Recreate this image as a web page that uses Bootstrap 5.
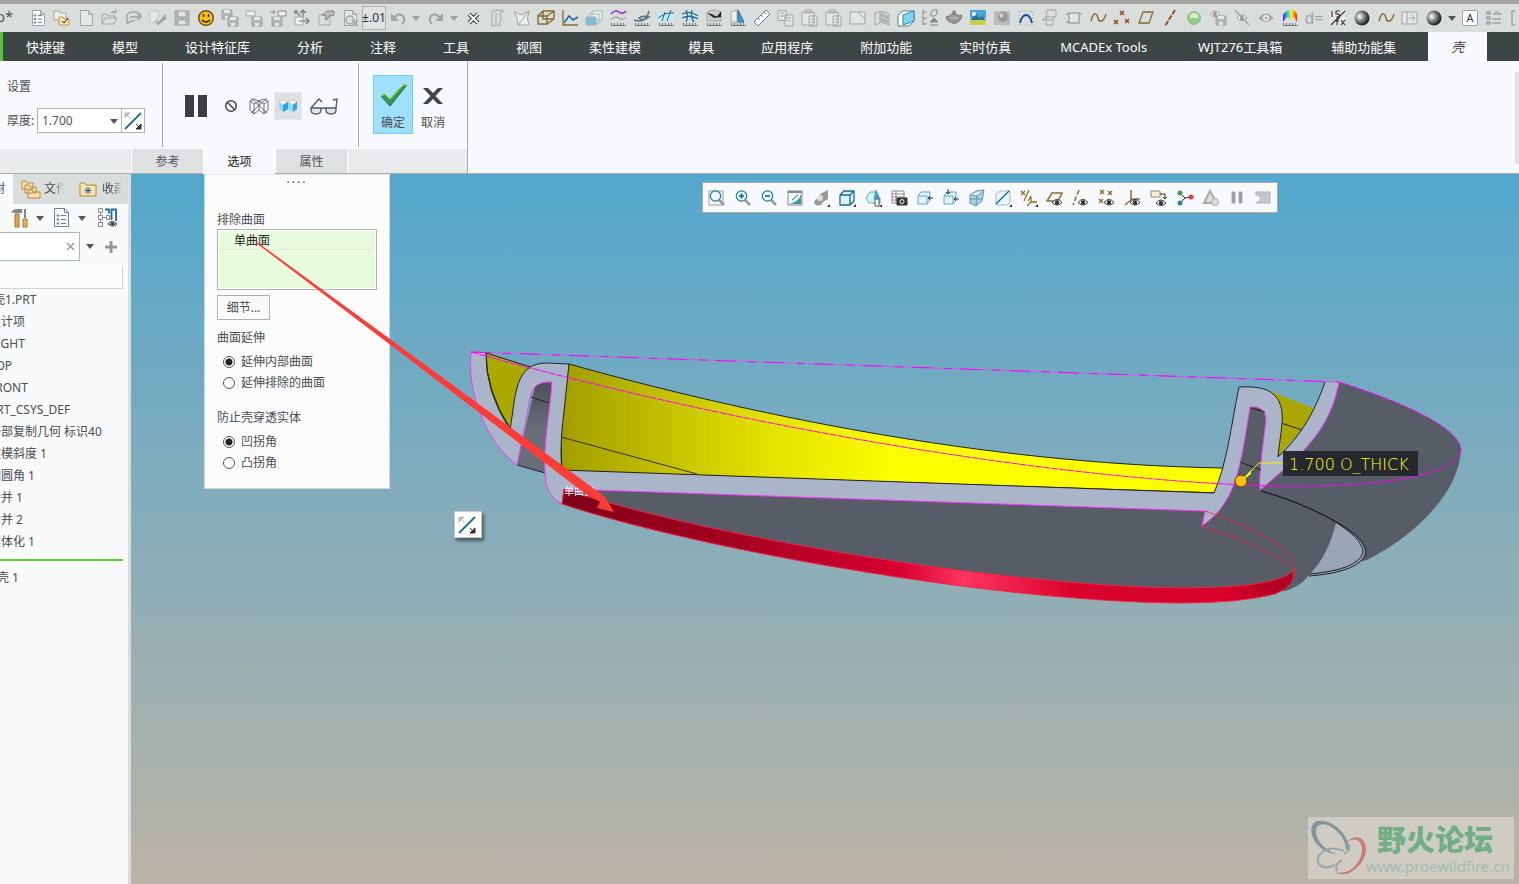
<!DOCTYPE html>
<html lang="zh-CN">
<head>
<meta charset="utf-8">
<meta name="viewport" content="width=device-width, initial-scale=1">
<title>壳1.PRT</title>
<link href="https://cdn.jsdelivr.net/npm/bootstrap@5.3.0/dist/css/bootstrap.min.css" rel="stylesheet">
<style>
:root{--chrome:#d9dedc;--paper:#f8f9fc;--ink:#4a4d50}
body{font:12px/18px "Noto Sans","Noto Sans CJK SC",sans-serif;color:var(--ink);background:var(--paper)}
button{font:inherit;color:inherit}
svg{display:block;flex:none}
.ic{width:18px;height:18px;fill:none;stroke:currentColor;stroke-width:1}
.tool{width:24px;height:24px;padding:0;border:0;background:none;display:flex;align-items:center;justify-content:center;flex:none}
.tool.arrow{width:12px}
.quick{height:32px;border-top:4px solid #a3a3a1;background:var(--chrome);padding-left:26px;color:#a3a5a5}
.quick .brandcut{left:-4px;top:3px;font-size:15px;color:#555}
.quick .early{margin-right:2px;opacity:.45}
.boxed{border:1px solid #b0b2b2;background:#e0e2e2;color:#333;font-size:12px}
.keycap{width:16px;height:16px;margin:0 4px;border:1px solid #9aa4a8;border-radius:2px;background:#fff;color:#333;font-size:11px;line-height:14px}
.tabs{height:29px;background:#3d4545;border-left:3px solid #5bbf3f;font-size:13px}
.tabs .nav-link{color:#fff;padding:0 24px 0 23px;line-height:30px}
.tabs .nav-link.roomy{padding:0 26px 0 25px}
.tabs .nav-link.now{background:var(--paper);color:#444;font-style:italic;margin-left:8px;padding:0 23px;width:59px}
.ribbon{border-bottom:1px solid #aaacae;height:113px}
.ribbon-main{width:468px;border-right:1px solid #a8aaac}
.zone{border-right:1px solid #a8aaac;height:84px;margin-top:2px}
.zone.last{border:0}
.z1{width:163px;padding:15px 0 0 7px}
.z2{width:196px;padding:15px 0 13px 19px}
.thick{width:85px;height:25px;border:1px solid #b0b2b4;border-radius:0;background:#fff;appearance:none;padding:0 4px;color:#555;font-size:12px}
.thick-label{width:30px}
.thick-wrap::after,.caret::after{content:"";display:block;border:4px solid transparent;border-top:5px solid #555;border-bottom:0}
.thick-wrap::after{position:absolute;right:4px;top:11px;pointer-events:none}
.flip{width:23px;height:25px;border:1px solid #b0b2b4;border-left:0;background:#fff;padding:0 2px}
.big{width:40px;height:59px;border:1px solid transparent;background:none;padding:5px 0 0}
.big.go{background:#a0e0ff;border-color:#70ccff}
.sub{height:24px;background:#eaebed}
.sub .lead-gap{width:131px}
.sub .nav-link{width:72px;padding:0;text-align:center;line-height:26px;height:24px;background:#dfe0e2;color:#555;border-left:1px solid #fff}
.sub .nav-link.now{background:var(--paper);color:#222;height:25px}
.sub .rest{border-left:1px solid #fff}
.gripbar{width:4px;background:#e0e1e3;margin:11px 0 9px}
.side{width:131px;border-right:3px solid var(--chrome);background:#f8fafc;overflow:hidden}
.side-tabs{height:30px;background:var(--chrome)}
.side-tabs button{border:0;background:none;padding:0;white-space:nowrap;overflow:hidden}
.side-tabs .now{width:13px;background:#f8fafc;direction:rtl;padding-right:8px}
.fade-out{width:20px;overflow:hidden;-webkit-mask:linear-gradient(90deg,#000 50%,transparent);mask:linear-gradient(90deg,#000 50%,transparent)}
.find{width:80px;height:29px;border:1px solid #a9b8b4;border-left:0;background:#fff}
.find input{width:60px;border:0;background:none;outline:0}
.heading{width:123px;height:23px;border:1px solid #cfd2d4;border-width:0 1px 1px 0;background:#fafbfb;margin-top:5px}
.tree{margin-left:-11px;line-height:22px}
.tree li{white-space:nowrap;height:22px}
.tree .insert{width:134px;height:2px;background:#62c73d;margin:6px 0}
.view{background:linear-gradient(#53a7cd,#bbb3a5);min-height:600px;overflow:hidden}
.scene{position:absolute;left:0;top:0;width:100%;height:100%;pointer-events:none}
.options{position:absolute;left:73px;top:0;width:186px;background:#fbfbfb;border:1px solid #cfd4d6;border-top-color:#e6e8e8;padding:0 12px 15px}
.dots{height:36px;text-align:center;line-height:8px;letter-spacing:2px}
.pick{border:1px solid #b0b2b2;background:#e9fbdd;height:61px;box-shadow:inset 0 0 0 1px #fff;padding:2px}
.pick div{padding-left:14px;color:#222;border-bottom:1px solid #e3e6e8;height:18px;line-height:17px}
.detail{border:1px solid #b0b2b2;background:#fafafa;width:53px;height:25px;padding:0;margin:5px 0 9px}
.rad{display:flex;align-items:center;height:21px;padding-left:6px;gap:6px}
.rad input{appearance:none;width:12px;height:12px;border:1px solid #555;border-radius:50%;background:#fff;margin:0}
.rad input:checked{background:radial-gradient(#222 0 3px,#fff 4px)}
.floatbar{position:absolute;left:571px;top:8px;height:31px;border:1px solid #b0a9a5;background:var(--paper);padding:0 1px;color:#555}
.floatbar .tool{width:26px;height:29px}
.mini{position:absolute;left:323px;top:337px;width:28px;height:27px;border:1px solid #c8c8c8;background:#fbfbfb;padding:0 3px;box-shadow:2px 3px 3px #4a5a60}
.mark-box{position:absolute;right:5px;bottom:5px;width:206px;height:62px;background:rgba(222,220,212,.62);overflow:hidden}
.mark-box .cn{left:69px;top:2px;font:900 29px/38px "Noto Sans CJK SC",sans-serif;color:#72ae84;white-space:nowrap}
.mark-box .url{left:58px;top:38px;font:15px/22px "Noto Sans",sans-serif;color:#a3bdb3;white-space:nowrap}
</style>
</head>
<body>
<div class="d-flex flex-column vh-100 overflow-hidden">
<header>
  <div class="quick d-flex align-items-center position-relative overflow-hidden" id="quick"><span class="brandcut position-absolute">o*</span></div>
  <nav class="tabs nav flex-nowrap text-nowrap overflow-hidden">
    <a class="nav-link" href="#">快捷键</a><a class="nav-link" href="#">模型</a><a class="nav-link" href="#">设计特征库</a><a class="nav-link" href="#">分析</a><a class="nav-link" href="#">注释</a><a class="nav-link" href="#">工具</a><a class="nav-link" href="#">视图</a><a class="nav-link" href="#">柔性建模</a><a class="nav-link" href="#">模具</a><a class="nav-link" href="#">应用程序</a><a class="nav-link" href="#">附加功能</a><a class="nav-link" href="#">实时仿真</a><a class="nav-link roomy" href="#">MCADEx Tools</a><a class="nav-link roomy" href="#">WJT276工具箱</a><a class="nav-link" href="#">辅助功能集</a><a class="nav-link now text-center" href="#">壳</a>
  </nav>
  <div class="ribbon d-flex justify-content-between">
    <div class="ribbon-main d-flex flex-column justify-content-between">
      <div class="d-flex">
        <div class="zone z1">
          <div>设置</div>
          <div class="d-flex align-items-center mt-2 pt-1">
            <label for="thick" class="thick-label text-nowrap">厚度:</label>
            <div class="thick-wrap position-relative"><select id="thick" class="thick"><option>1.700</option></select></div>
            <button class="flip" aria-label="反向"><svg class="ic" viewBox="0 0 18 18"><path d="M1 17L17 1" stroke="#1d6c95" stroke-width="1.8"/><path d="M1 1h5L1 6zM2 2l5 5" fill="#bbb" stroke="#bbb"/><path d="M17 17h-5l5-5zM16 16l-4-4" fill="#333" stroke="#333"/></svg></button>
          </div>
        </div>
        <div class="zone z2 d-flex align-items-center">
          <button class="tool" aria-label="暂停" style="width:28px"><svg width="24" height="24"><path d="M1 1h9v22H1zM14 1h9v22h-9z" fill="#3c3c3e"/></svg></button>
          <button class="tool ms-2" aria-label="无预览" style="width:26px"><svg class="ic" viewBox="0 0 18 18"><circle cx="9" cy="9" r="5.3" stroke-width="1.6"/><path d="M5.3 5.3l7.4 7.4" stroke-width="1.6"/></svg></button>
          <button class="tool" aria-label="线框" style="width:30px"><svg class="ic" viewBox="0 0 20 18" style="width:20px"><path d="M1 4l4-2 5 2 5-2 4 2v9l-4 4-5-4-5 4-4-4zM1 4l4 3 5-3 5 3 4-3M5 7v10M15 7v10M2 1l16 15M18 1L2 16M10 4v9" stroke-width=".8"/></svg></button>
          <button class="tool border border-secondary-subtle" aria-label="着色" style="width:28px;height:28px;background:#dfe0e2"><svg class="ic" viewBox="0 0 20 18" style="width:20px"><path d="M1 5l4-2 5 2 5-2 4 2-4 3-5-3-5 3z" fill="#fff" stroke="#ccc"/><path d="M1 5l4 3v7l-4-3zM10 5l5 3v7l-5-3z" fill="#8fd8f6" stroke="none"/><path d="M10 5L5 8v7l5-3zM19 5l-4 3v7l4-3z" fill="#2aa4dd" stroke="none"/></svg></button>
          <button class="tool ms-2" aria-label="预览" style="width:28px"><svg width="28" height="18" viewBox="0 0 28 18" fill="#dbe9f5" stroke="#555" stroke-width="1.3"><path d="M1 11h10v2q0 4-5 4t-5-4zM16 11h10v2q0 4-5 4t-5-4z"/><path d="M11 12q2.500-2 5 0M1 11l8-9 3 3M26 11l1-9-4 1" fill="none"/></svg></button>
        </div>
        <div class="zone last d-flex ps-3 pt-1"><div class="d-flex mt-2" style="margin-left:-2px">
          <button class="big go"><svg class="mx-auto" width="30" height="24" viewBox="0 0 30 24"><path d="M3 14l4-2 5 5L25 3h4L12 24z" fill="#2f9a54" stroke="#226b41"/><path d="M3 14l4-2 5 5L25 3h4" fill="none" stroke="#c8e830"/></svg><span class="d-block mt-2">确定</span></button>
          <button class="big"><svg class="mx-auto" width="30" height="24"><path d="M5 6h5l5 5 5-5h5l-7.500 8L25 22h-5l-5-5-5 5H5l7.500-8z" fill="#444"/></svg><span class="d-block mt-2">取消</span></button>
        </div></div>
      </div>
      <div class="sub nav flex-nowrap"><span class="lead-gap"></span><a class="nav-link" href="#">参考</a><a class="nav-link now" href="#">选项</a><a class="nav-link" href="#">属性</a><span class="rest"></span></div>
    </div>
    <div class="gripbar"></div>
  </div>
</header>
<main class="d-flex flex-fill">
  <aside class="side flex-shrink-0">
    <div class="side-tabs d-flex align-items-center">
      <button class="now h-100">树</button>
      <button class="d-flex align-items-center ms-2" style="gap:3px"><svg width="20" height="20" fill="#fbe3b0" stroke="#b58a3c"><path d="M1 2h4l1 2h6v6H1zM4 6h4l1 2h6v6H4zM7 11h4l1 2h7v6H7z"/></svg><span class="fade-out">文件</span></button>
      <button class="d-flex align-items-center" style="gap:5px;margin-left:15px"><svg width="18" height="18" fill="#fbe3b0" stroke="#b58a3c"><path d="M1 3h5l1 2h10v11H1z"/><path d="M9 7v7M5.500 10.500h7M6.500 8l5 5M11.500 8l-5 5" stroke="#1d6c95"/></svg><span class="fade-out">收藏</span></button>
    </div>
    <div class="d-flex align-items-center" style="height:28px;padding-left:10px">
      <button class="tool" aria-label="设置" style="width:20px"><svg width="20" height="22"><path d="M5 7h4v13H5z" fill="#d8a850" stroke="#a07630"/><path d="M1 6q2-4 6-4h5v4H5q-2-1-4 0z" fill="#7c848a"/><path d="M15 2v9" stroke="#888" stroke-width="2"/><path d="M13 12h4v8h-4z" fill="#e0b460" stroke="#a07630"/></svg></button>
      <button class="tool caret" aria-label="设置菜单" style="width:20px"></button>
      <button class="tool" aria-label="显示"><svg width="18" height="22" fill="#f3f8fa" stroke="#71848c"><path d="M1.500 1.500h10l4 4v14h-14zM11.500 1.500v4h4"/><path d="M4 8h2v1H4zM4 12h2v1H4zM4 16h2v1H4zM8 8.500h5M8 12.500h5M8 16.500h5"/></svg></button>
      <button class="tool caret" aria-label="显示菜单" style="width:16px"></button>
      <button class="tool" aria-label="树列" style="width:30px;margin-left:3px"><svg width="22" height="22" fill="none" stroke="#888"><path d="M1.500 1.500h4v4h-4zM1.500 8.500h4v4h-4zM1.500 15.500h4v4h-4zM3.500 6v2M3.500 13v2M6 10.500h3M9.500 8.500h3v4h-3z"/><path d="M8 2.500h4v4M14.500 2v11M14 2.500h5V14" stroke="#1d6c95" stroke-width="1.800"/><path d="M11 17q4-5 9 0-4 4-9 0z" fill="#fff" stroke="#333"/><circle cx="15.500" cy="17" r="2" fill="#333"/></svg></button>
    </div>
    <div class="d-flex align-items-center">
      <div class="find d-flex align-items-center"><input type="search" aria-label="搜索"><button class="tool" aria-label="清除" style="width:20px"><svg width="9" height="9"><path d="M1 1l7 7M8 1L1 8" stroke="#999" stroke-width="1.500"/></svg></button></div>
      <button class="tool caret" aria-label="搜索选项" style="width:19px"></button>
      <button class="tool" aria-label="添加"><svg width="12" height="12"><path d="M6 0v12M0 6h12" stroke="#999" stroke-width="3"/></svg></button>
    </div>
    <div class="heading"></div>
    <ul class="tree list-unstyled mb-0">
      <li class="ps-1">壳1.PRT</li><li>设计项</li><li>RIGHT</li><li>TOP</li><li>FRONT</li><li>PRT_CSYS_DEF</li><li>外部复制几何 标识40</li><li>拔模斜度 1</li><li>倒圆角 1</li><li>合并 1</li><li>合并 2</li><li>实体化 1</li>
      <li class="insert" aria-hidden="true"></li><li class="ps-2">壳 1</li>
    </ul>
  </aside>
  <section class="view flex-fill position-relative">
    <svg class="scene" viewBox="131 174 1388 710" preserveAspectRatio="xMinYMin slice" fill="none">
      <defs>
        <linearGradient id="y1" x1="565" x2="1220" y1="0" y2="0" gradientUnits="userSpaceOnUse"><stop stop-color="#a29e00"/><stop offset=".3" stop-color="#e2e000"/><stop offset=".52" stop-color="#ff0"/><stop offset="1" stop-color="#ff0"/></linearGradient>
        <linearGradient id="r1" x1="562" x2="1295" y1="0" y2="0" gradientUnits="userSpaceOnUse"><stop stop-color="#7d0018"/><stop offset=".25" stop-color="#a80020"/><stop offset=".46" stop-color="#d60030"/><stop offset=".55" stop-color="#ff3560"/><stop offset=".7" stop-color="#d8002c"/><stop offset=".9" stop-color="#d8002c"/><stop offset="1" stop-color="#a80020"/></linearGradient>
        <linearGradient id="v1" x1="0" x2="0" y1="382" y2="430" gradientUnits="userSpaceOnUse"><stop stop-color="#4c5058"/><stop offset="1" stop-color="#686d77"/></linearGradient>
      </defs>
      <path d="M564 489L1205 511L1236 478L1250 407Q1264 405 1266 418L1262 480L1339 382C1400 401 1461 428 1461 450C1459 490 1420 533 1367 560L1309 575Q1300 587 1285 591L1180 597C1000 592 700 540 564 495z" fill="#575d67"/>
      <path d="M1336 523Q1372 543 1363 559Q1350 572 1309 575Q1328 556 1336 523z" fill="#9aa6b6"/>
      <path d="M1261 491C1300 502 1367 530 1366 553Q1360 572 1309 576M1261 491C1300 501 1364 530 1363 553Q1357 570 1309 574" stroke="#1c1e22"/>
      <path d="M486 353L534 368Q550 380 530 385L510 428Q486 391 486 353z" fill="#aba800" stroke="#222"/>
      <path d="M569 364C740 412 980 464 1223 468L1219 493L562 471Q558 410 569 364z" fill="url(#y1)" stroke="#222"/>
      <path d="M561 437L697 474" stroke="#333"/>
      <path d="M1270 391L1315 409L1301 430L1277 458z" fill="#aaa700"/>
      <path d="M1281 423L1302 430" stroke="#222"/>
      <path d="M536 382H552L545 473L517 465z" fill="url(#v1)"/>
      <path d="M531 397L549 403M517 465L545 473" stroke="#222"/>
      <path d="M471 352H486Q485 391 510 430C516 395 514 363 547 363L569 364L562 430Q560 455 562 470L1214 493C1228 460 1231 425 1239 387Q1257 386 1267 390C1291 402 1280 430 1278 457C1303 434 1316 408 1325 382H1339C1330 430 1303 454 1260 490C1258 474 1266 425 1266 418Q1264 405 1250 407C1240 470 1236 502 1202 526L1205 511L564 489L562 504Q545 496 545 473C543 443 550 412 552 382C528 381 531 397 526 420L517 465C486 442 467 393 471 352z" fill="#abb5c9"/>
      <path d="M486 353Q485 391 510 430C516 395 514 363 547 363L569 364L562 430Q560 455 562 470L1214 493C1228 460 1231 425 1239 387Q1257 386 1267 390C1291 402 1280 430 1278 457C1303 434 1316 408 1325 382" stroke="#222"/>
      <path d="M471 352C467 393 486 442 517 465L526 420C531 397 528 381 552 382C550 412 543 443 545 473Q545 496 562 504L564 489L1205 511L1202 526C1236 502 1240 470 1250 407Q1264 405 1266 418C1266 425 1258 474 1260 490C1303 454 1330 430 1339 382" stroke="#f3f"/>
      <path d="M1240 462L1261 470M1251 408L1265 412" stroke="#222"/>
      <path d="M471 352L1339 382" stroke="#d45cdd"/><path d="M471 352L1339 382" stroke="#f0f" stroke-dasharray="20 12 8 9"/>
      <path d="M471 352C760 432 1040 474 1225 484C1340 491 1455 482 1461 450C1461 428 1400 401 1339 382" stroke="#f0f" stroke-dasharray="7 1"/>
      <path d="M564 489C700 535 1000 586 1180 588Q1276 588 1293 571Q1297 585 1275 594Q1240 603 1180 603C1000 602 700 550 562 504z" fill="url(#r1)" stroke="#f02345"/>
      <path d="M1205 511Q1308 547 1293 576M1202 526Q1283 553 1293 571" stroke="#ff1f3d" stroke-dasharray="4 1"/>
      <text x="564" y="495" fill="#fff" font-size="10">单曲面</text>
      <circle cx="1241" cy="481" r="6" fill="#ffc000" stroke="#5a4100"/>
      <path d="M1244 478L1259 463H1283" stroke="#ee0"/><path d="M1243 479l8-9v4l-4 3z" fill="#ff0"/>
      <path d="M1283 451h135v25h-135z" fill="#23262c" opacity=".96"/>
      <text x="1289" y="470" fill="#ff2" font-family="DejaVu Sans" font-weight="200" font-size="16">1.700 O_THICK</text>
    </svg>
    <form class="options">
      <div class="dots">....</div>
      <div>排除曲面</div>
      <div class="pick"><div>单曲面</div></div>
      <button type="button" class="detail">细节...</button>
      <div class="mb-1">曲面延伸</div>
      <label class="rad"><input type="radio" name="ext" checked>延伸内部曲面</label>
      <label class="rad"><input type="radio" name="ext">延伸排除的曲面</label>
      <div class="mt-3 mb-1">防止壳穿透实体</div>
      <label class="rad"><input type="radio" name="pen" checked>凹拐角</label>
      <label class="rad"><input type="radio" name="pen">凸拐角</label>
    </form>
    <div class="floatbar d-flex" id="floatbar"></div>
    <button class="mini" aria-label="反向"><svg class="ic" viewBox="0 0 18 18"><path d="M1 17L17 1" stroke="#1d6c95" stroke-width="1.8"/><path d="M1 1h5L1 6zM2 2l5 5" fill="#bbb" stroke="#bbb"/><path d="M17 17h-5l5-5zM16 16l-4-4" fill="#333" stroke="#333"/></svg></button>
    <svg class="scene" viewBox="131 174 1388 710" preserveAspectRatio="xMinYMin slice"><path d="M256 243L257 242L390 339L593 488L605 497L614 512L597 508L600 502L587 495L388 343z" fill="#ff3c38"/></svg>
    <div class="mark-box">
      <svg width="62" height="62"><path d="M41 33C40 12 18 0 7 5C-3 12 8 36 28 37C12 31 4 16 10 9C18 2 38 18 38 32z" fill="#80969b"/><path d="M37 27C44 17 56 18 58 30C59 48 38 63 28 55C42 59 55 44 54 31C52 20 43 21 37 27z" fill="#cd7b76"/><path d="M40 26Q44 33 36 37M36 34C16 26 6 41 11 47Q16 53 27 48M29 54Q26 47 34 43" fill="none" stroke="#9ba8a8" stroke-width="2"/></svg>
      <span class="cn position-absolute">野火论坛</span><span class="url position-absolute">www.proewildfire.cn</span>
    </div>
  </section>
</main>
</div>
<script src="https://cdn.jsdelivr.net/npm/bootstrap@5.3.0/dist/js/bootstrap.bundle.min.js"></script>
<script>
const ruler = '<path d="M2 16.500h15M2.500 14v2M5.500 14v2M8.500 14v2M11.500 14v2M14.500 14v2" stroke="#777"/>';
const floppy = (x, y) => `<path d="M${x} ${y}h10v9h-10z" fill="#b4b6b6" stroke="#a0a2a2"/><path d="M${x+2} ${y}h6v3h-6zM${x+3} ${y+6}h4v3h-4z" fill="#e4e6e6" stroke="none"/>`;
const eye = (x, y, c) => `<path d="M${x-5} ${y}q5-6 10 0q-5 5-10 0z" fill="#fff" stroke="${c}"/><circle cx="${x}" cy="${y}" r="1.800" fill="${c}" stroke="${c}"/>`;
const ball = '<defs><radialGradient id="ball" cx=".35" cy=".4" r=".6"><stop stop-color="#fff"/><stop offset=".5" stop-color="#888"/><stop offset="1" stop-color="#222"/></radialGradient></defs><circle cx="9" cy="9" r="7.500" fill="url(#ball)" stroke="none"/>';
const wave = '<path d="M2 12C5 1 8 5 9 9s5 6 8-4" stroke="#8a6c2e" stroke-width="1.500"/>';
const page = '<path d="M3.500 1.500h8l4 4v11h-12zM11.500 1.500v4h4" fill="#e6e8e8"/>';
const caret = 'caret';
const quick = [
 ['模型设置', '<path d="M3.500 1.500h8l4 4v11h-12zM11.500 1.500v4h4" fill="#fff" stroke="#9aa4a8"/><path d="M5 6h2v1H5zM5 9.500h2v1H5zM5 13h2v1H5zM9 6.500h4M9 10h4M9 13.500h4" stroke="#6c8b9b"/>'],
 ['工作目录', '<path d="M1 2h5l1 2h6v7H1z" fill="#eee"/><path d="M6 8h4l1 2h5v6H6z" fill="#fbe3b0" stroke="#c69542"/><path d="M9 12l2 2 4-5" stroke="#222"/>'],
 ['新建', page],
 ['打开', '<path d="M1 15V5h5l1 2h7v3M1 15l3-6h12l-3 6zM9 4q3-3 6-1M15 0v4h-4" fill="#ddd"/>'],
 ['发送', '<path d="M2 15V7q0-4 7-4 6 0 7 4M2 15q4-4 8-3M5 8h10M12 5l4 3-4 3" stroke-width="1.500"/>'],
 ['编辑', '<path d="M1 2h9v5l-5 7H1z" fill="#e6e8e8" stroke="#c4c6c6"/><path d="M7 12l2 3 8-9M9 15l8-6" stroke-width="2"/>'],
 ['保存', '<path d="M2 2h14v14H2z" fill="#b4b6b6"/><path d="M5 2h8v6H5zM5 11h8v5H5z" fill="#e4e6e6"/>'],
 ['笑脸', '<circle cx="9" cy="9" r="7.300" fill="#ffc20e" stroke="#6b5312" stroke-width="1.500"/><path d="M5 11q4 4 8 0M6.500 5v3M11.500 5v3" stroke="#222" stroke-width="1.500"/>'],
 ['保存副本', floppy(1,1)+floppy(7,8)], ['备份', '<path d="M1 2h9v5H1z" fill="#eee"/>'+floppy(7,8)],
 ['另存', '<path d="M1 3h5M4 1l2 2-2 2M9 2h8v5H9z" fill="#eee" stroke="#888"/>'+floppy(3,8)],
 ['移动', '<path d="M2 8h8v8H2z" fill="#eee"/><path d="M6 12h10M13 9l3 3-3 3M10 8V2M7 4l3-3 3 3M2 5V2h3M2 2l5 5" stroke="#777" stroke-width="1.200"/>'],
 ['属性', '<path d="M2 6h11v10H2z" fill="#ddd"/><path d="M5 6l5-4h7v4l-5 1-2 4-2-1 1-4z" fill="#bbb" stroke="#888"/>'],
 ['搜索', page+'<circle cx="9" cy="11" r="4" fill="#ddd" stroke-width="1.500"/><path d="M11 11l6 6M17 11l-6 6" stroke-width="1.500"/>'],
 ['公差', null],
 ['撤销', '<path d="M5 9q4-6 9-2 3 4-1 8" stroke-width="2.200"/><path d="M2 4v8h8z" fill="#a3a5a5" stroke="none"/>'], caret,
 ['重做', '<path d="M13 9q-4-6-9-2-3 4 1 8" stroke-width="2.200"/><path d="M16 4v8H8z" fill="#a3a5a5" stroke="none"/>'], caret,
 ['关闭', '<path d="M4 5l9 9M13 5l-9 9" stroke="#333" stroke-width="4"/><path d="M4 5l9 9M13 5l-9 9" stroke="#fff" stroke-width="2"/>'],
 ['零件', '<path d="M3 3l4-2 8 1-4 2v4q4 2 0 4v4L3 17zM7 3v12" fill="#ddd"/>'],
 ['曲面', '<path d="M1 2q5 4 8 4l7-4q-3 8 0 14H5Q5 8 1 2zM5 16L16 2" fill="#eee"/>'],
 ['组件', '<path d="M6 2h11v8H6zM1 7h9v8H1zM6 2L1 7M17 2l-7 5M17 10l-7 5" stroke="#8a6c2e" stroke-width="1.400"/>'],
 ['图表', '<path d="M2 1v15h15" stroke="#8a6c2e" stroke-width="1.300"/><path d="M3 14l5-7 4 4 5-3" stroke="#146b9c" stroke-width="1.500"/>'],
 ['图层', '<path d="M7 2h10v9H7zM4 5h10v9H4z" fill="#eee" stroke="#9bb"/><path d="M1 8h10v8H1z" fill="#7fbcdc" stroke="#9bb"/>'],
 ['曲率', '<path d="M2 5q4-5 8-2t7-1" stroke="#9a48c8" stroke-width="1.800"/><path d="M2 11q4-5 8-2t7-1" stroke="#888"/>'+ruler],
 ['偏移', '<path d="M1 11q7 3 15-3-6-2-10 1 3 4 8-1l2-6" stroke="#55707c" stroke-width="1.500"/>'+ruler],
 ['截面', '<path d="M1 3q8 4 16 1v8H1z" fill="#bfeefa" stroke="none"/><path d="M1 9q8-6 16-5M5 12L8 3M10 12l4-11" stroke="#1d6c95"/>'+ruler],
 ['网格', '<path d="M1 5q8-4 16 2M1 9q8-4 16 1M5 1q3 6 0 12M11 1q-2 7 2 12" stroke="#1d6c95" stroke-width="1.300"/>'+ruler],
 ['反射', '<path d="M2 3q7-4 14 0v9H2z" fill="#ccc"/><path d="M2 4q6 1 8 3t6-5v6l-7 1z" fill="#222" stroke="none"/>'+ruler],
 ['拔模', '<path d="M2 3l6-2v12H2z" fill="#eee"/><path d="M9 1l6 12H9z" fill="#3aa0d0" stroke="#1d6c95"/>'+ruler],
 ['测量', '<path d="M1 13L13 1l4 4L5 17zM5 9l2 2M8 6l2 2M11 3l2 2" fill="#fff" stroke="#71848c"/>'],
 ['复制', '<path d="M1 1.500h8v10H1zM8 6h8v11H8zM3 4h4M3 7h4M10 9h4M10 12h4" fill="#e4e6e6"/>'],
 ['粘贴', '<path d="M1 3h12v13H1zM4 1h6v3H4zM8 7h8v10H8zM10 10h4M10 13h4" fill="#e4e6e6"/>'],
 ['选择性粘贴', '<path d="M1 3h12v13H1zM4 1h6v3H4zM8 7h8v10H8zM10 10h4M10 13h4" fill="#e4e6e6"/>'],
 ['窗口', '<path d="M1 3h15v12H1zM9 3l7 7" fill="#e4e6e6"/>'],
 ['镜像', '<path d="M2 4l5-2v12l-5 2zM8 2l8 3v11l-8-3zM10 4v10M12 5v9M14 6v9M8 6l8 3M8 10l8 3" fill="#ddd"/>'],
 ['盒', '<path d="M1 6l5-4h11v10l-5 5H1z" fill="#fff" stroke="#60808c"/><path d="M6 6l11-4v10L6 16z" fill="#7ed5ef" stroke="#288cad"/>'],
 ['结构', '<path d="M2 1v15M2 3h4M2 9h4M2 15h4M10 3l2-2h4v4l-2 2h-4z" stroke="#888"/><path d="M9 13l4-4 4 4zM9 16h8" fill="#888" stroke="#888"/>'],
 ['渲染', '<path d="M4 7q5-5 10 0 3-2 3 0 0 3-4 6-4 3-8 0-4-2-4-5 1-2 3 0zM8 2h2v3H8z" fill="#999" stroke="#777"/><path d="M5 9h8" stroke="#ccc"/>'],
 ['背景', '<path d="M1 1h16v8H1z" fill="#4aa6d8" stroke="none"/><path d="M1 11l6-6 3 4 3-2 4 4z" fill="#287195" stroke="none"/><path d="M1 11h16v5H1z" fill="#c8cf4a" stroke="none"/><circle cx="5" cy="5" r="2" fill="#fff" stroke="none"/>'],
 ['材质', '<path d="M1 2h16v14H1z" fill="#bbb" stroke="none"/><circle cx="10" cy="8" r="5" fill="#999"/><circle cx="8.500" cy="6.500" r="2" fill="#d8d8d8" stroke="none"/>'],
 ['样条', '<path d="M2 2h14v14H2z" stroke-dasharray="1 2"/><path d="M3 14Q5 6 9 6t6 8" stroke="#164a9a" stroke-width="1.800"/>'],
 ['平面', '<path d="M6 1h9v6l-3 3v6H5zM1 11l4-3h9l-4 3z" fill="#ddd"/>'],
 ['区域', '<path d="M4 4h10v10H4zM1 5h3M1 13h3M14 5h3" fill="#e4e6e6" stroke-width="1.500"/>'],
 ['曲线', wave],
 ['基准点', '<path d="M7 2l4 4M11 2L7 6M1 11l4 4M5 11l-4 4M12 10l4 4M16 10l-4 4" stroke="#9c4c20" stroke-width="1.600"/>'],
 ['基准面', '<path d="M6 3h10l-4 11H2z" stroke="#8a6c2e" stroke-width="1.300"/>'],
 ['基准轴', '<path d="M14 1L4 17" stroke="#9c4c20" stroke-width="2" stroke-dasharray="5 1.500"/>'],
 ['再生', '<circle cx="9" cy="9" r="6.500" fill="#8fd07c" stroke="#aaa"/><path d="M5 6q4-4 8 0v3H5z" fill="#d2f0c6" stroke="none"/>'],
 ['保存可见', floppy(7,7)+eye(6,5,'#999')], ['隐藏', eye(9,9,'#999')+'<path d="M2 1l14 15" stroke-width="1.500"/>'], ['显示', '<path d="M2 9q7-8 14 0-7 7-14 0z" fill="#aaa"/><circle cx="9" cy="9" r="3" fill="#eee" stroke="none"/><circle cx="9" cy="9" r="1" fill="#888"/>'],
 ['云图', '<defs><linearGradient id="hue"><stop stop-color="#80f"/><stop offset=".3" stop-color="#0cf"/><stop offset=".6" stop-color="#ff0"/><stop offset="1" stop-color="#f20"/></linearGradient></defs><path d="M2 13V6q3-5 8-5t6 5v7l-3-5-4 2-3-2z" fill="url(#hue)" stroke="none"/>'+ruler],
 ['尺寸', null],
 ['关系', '<path d="M1 2h15v14H1z" fill="#e8e8e8" stroke="none"/><path d="M3 2v6M7 2h4M7 2v3h3v3H7M16 2L2 16M11 9q-3-1-3 7M7 12h3M12 11l4 5M16 11l-4 5" stroke="#333" stroke-width="1.200"/>'],
 ['外观', ball], ['草绘曲线', wave],
 ['转到', '<path d="M1 3h15v12H1zM6 3v12M8 9h6M11 6l3 3-3 3" fill="#e4e6e6"/>'],
 ['外观库', ball], caret,
 ['注解', null],
 ['更新', '<path d="M2 3h3v2H2zM2 8h3v2H2zM2 13h3v2H2zM7 10h9M7 14h9M8 5h3V2M13 2v3h4" stroke-width="1.500"/>'],
 ['窗口列表', '<path d="M6 2H3v14h3" stroke-width="1.500"/>']
];
const glyph = {'公差':'±.01','尺寸':'d=','注解':'A'};
const glyphClass = {'公差':'boxed','尺寸':'fs-6','注解':'keycap'};
const svg = body => `<svg class="ic" viewBox="0 0 18 18">${body}</svg>`;
document.getElementById('quick').insertAdjacentHTML('beforeend', quick.map((q, i) => {
  if (q === caret) return `<button class="tool arrow caret ${i < 20 ? 'early' : ''}" aria-label="更多"></button>`;
  const [name, body] = q;
  return body ? `<button class="tool" aria-label="${name}">${svg(body)}</button>`
              : `<button class="tool ${glyphClass[name]}" aria-label="${name}">${glyph[name]}</button>`;
}).join(''));

const cube = '<path d="M2 6l4-4h10v10l-4 4H2zM2 6h10v10M12 6l4-4" fill="#dff3fb" stroke="#1d6c95" stroke-width="1.300"/>';
const lens = '<path d="M11 11l5 5" stroke="#999" stroke-width="2.500"/><circle cx="7.500" cy="7" r="5.200" fill="#e6f6fc" stroke="#1d7ba6" stroke-width="1.200"/>';
const more = '<path d="M18 15v3h-3z" fill="#333" stroke="none"/>';
const small = '<path d="M2 7l3-4h9v8l-3 4H2zM2 7h9v8" fill="#e3f5fc" stroke="#58a9cc"/>';
const float = [
 ['重新调整', '<path d="M1 2h14v14H1z" stroke="#999"/>'+lens], ['放大', lens+'<path d="M5 7h5M7.500 4.500v5" stroke="#14608a" stroke-width="1.600"/>'], ['缩小', lens+'<path d="M5 7h5" stroke="#14608a" stroke-width="1.600"/>'],
 ['重画', '<path d="M2 2h14v14H2z" fill="#eef8fc" stroke="#888"/><path d="M3 15Q13 13 15 5v10z" fill="#3b93b8" stroke="none"/><path d="M2 3h14" stroke="#888" stroke-width="2"/><path d="M6 11l6-5" stroke="#1d6c95"/>'],
 ['渲染', '<path d="M2 14q1-5 6-5V5l8-4v9l-5 3q-2 5-7 3z" fill="#999" stroke="none"/><circle cx="8" cy="9" r="3" fill="#ddd" stroke="none"/>'+more],
 ['显示样式', cube+more], ['已保存方向', '<path d="M2 9l4-6h6l4 7v4H5z" fill="#d8f0fa" stroke="#58a9cc"/><path d="M12 1l4 9h-6z" fill="#3aa0d0" stroke="#58a9cc"/><path d="M11 10h4v7h-4z" fill="#fff"/>'+more],
 ['视图管理', '<path d="M2 2h12v12H2zM2 5h12M2 8h12M2 11h12M6 2v12" fill="#fff" stroke="#888"/><path d="M7 9h10v7H7z" fill="#333" stroke="#333"/><circle cx="12" cy="12.500" r="2" stroke="#fff"/>'],
 ['推', small+'<path d="M17 9h-4M14 7l-2 2 2 2" stroke="#333"/>'], ['拉', small+'<path d="M17 10h-4M14 8l-2 2 2 2M6 0v5M4 3l2 2 2-2" stroke="#333"/>'],
 ['透视图', '<path d="M2 6l6-4 8-1-2 11-6 5-6-3zM2 6l7 1 7-6M9 7l-1 10M2 10h12" fill="#a8d4e6" stroke="#6596ad"/>'],
 ['截面', '<path d="M2 5l4-3h10v11l-3 3H2z" fill="#e8f5fa" stroke="#a7bac0"/><path d="M2 15L15 2" stroke="#1d6c95" stroke-width="1.500"/>'+more],
 ['基准过滤', '<path d="M1 2l4 4M5 2L1 6M9 1L4 12M8 12l3-5M11 8v5h6M11 13l-4 4" stroke="#8a6c2e" stroke-width="1.300"/>'+more],
 ['平面显示', '<path d="M6 4h10l-4 8H1z" stroke="#8a6c2e" stroke-width="1.500"/>'+eye(11,13.5,'#333')], ['轴显示', '<path d="M7 1L1 16" stroke="#8a6c2e" stroke-width="1.500" stroke-dasharray="5 2"/>'+eye(11,13.5,'#333')],
 ['点显示', '<path d="M2 1l4 4M6 1L2 5M10 2l4 4M14 2l-4 4M1 10l4 4M5 10l-4 4" stroke="#8a6c2e" stroke-width="1.400"/>'+eye(11,13.5,'#333')], ['坐标系显示', '<path d="M7 1v10l-6 5M7 10h9" stroke="#8a6c2e" stroke-width="1.500"/>'+eye(11,13.5,'#333')],
 ['注释显示', '<path d="M1 2h9v6H1z" fill="#fff2c8" stroke="#888"/><path d="M10 5h5v5M13 8l2 2 2-2" stroke="#333"/>'+eye(11,14,'#333')],
 ['旋转中心', '<path d="M4 4l5 5 6-1M9 9l-5 5" stroke="#333"/><circle cx="4" cy="4" r="2.500" fill="#3c9c57" stroke="none"/><circle cx="15" cy="8" r="2.500" fill="#d2443b" stroke="none"/><circle cx="4" cy="14" r="2.500" fill="#2c83b5" stroke="none"/>'],
 ['仿真', '<path d="M2 14L8 2l7 12z" fill="#ddd" stroke="#aaa" stroke-width="2"/><circle cx="13" cy="13" r="3.500" fill="#ddd" stroke="#aaa"/>'],
 ['暂停', '<path d="M4 3h3v11H4zM11 3h3v11h-3z" fill="#999" stroke="#aaa"/>'], ['结果', '<path d="M2 3h14v11H2q6-3 4-6-1-2-4-2z" fill="#c4c6c8" stroke="#b0b2b4"/>']
];
document.getElementById('floatbar').innerHTML = float.map(([n, b]) => `<button class="tool" aria-label="${n}">${svg(b)}</button>`).join('');
</script>
</body>
</html>
